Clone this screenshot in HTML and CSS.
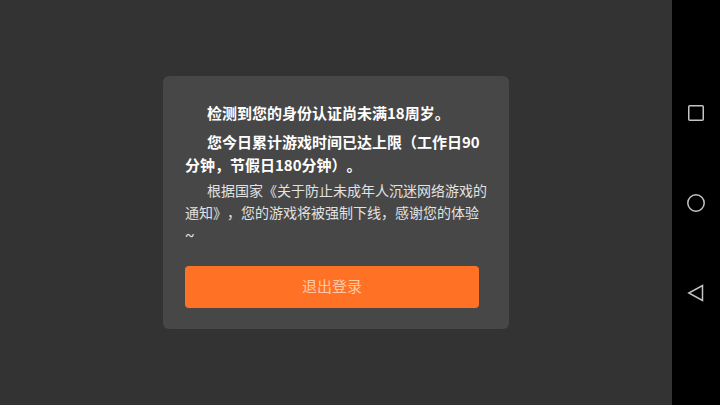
FILE: index.html
```html
<!DOCTYPE html>
<html lang="zh-CN">
<head>
<meta charset="utf-8">
<title>防沉迷提示</title>
<link rel="stylesheet" href="styles.css">
</head>
<body>
<main class="stage">
  <section class="dialog">
    <p class="lead first">检测到您的身份认证尚未满18周岁。</p>
    <p class="lead second">您今日累计游戏时间已达上限（工作日90分钟，节假日180分钟）。</p>
    <p class="note">根据国家《关于防止未成年人沉迷网络游戏的通知》，您的游戏将被强制下线，感谢您的体验~</p>
    <button class="logout">退出登录</button>
  </section>
</main>
<nav class="navbar">
  <svg class="nav-icon" viewBox="0 0 18 18"><rect x="1.75" y="1.75" width="14.5" height="14.5" rx="1" /></svg>
  <svg class="nav-icon" viewBox="0 0 18 18"><circle cx="9" cy="9" r="8.2" /></svg>
  <svg class="nav-icon" viewBox="0 0 18 18"><path d="M15.5 1.5V16.5L1.8 9Z" /></svg>
</nav>
</body>
</html>
```

FILE: styles.css
```css
* { box-sizing: border-box; }
html, body { margin: 0; height: 100%; }
body {
  display: flex;
  width: 720px;
  height: 405px;
  overflow: hidden;
  background: #333333;
  font-family: "Roboto", "Noto Sans CJK SC", sans-serif;
  text-spacing-trim: space-all;
}
.stage {
  width: 672px;
  height: 405px;
  display: flex;
  align-items: flex-start;
  justify-content: center;
  padding: 76px 0 0 0;
}
.dialog {
  width: 346px;
  height: 253px;
  background: #474747;
  border-radius: 6px;
  padding: 25px 22px 0 22px;
}
.lead {
  margin: 0;
  color: #ffffff;
  font-family: "Noto Sans CJK SC", sans-serif;
  font-size: 15px;
  font-weight: 700;
  line-height: 23px;
  text-indent: 22px;
}
.second { margin-top: 6px; }
.note {
  margin: 4px 0 0 0;
  color: #e2e2e2;
  font-size: 14px;
  line-height: 22px;
  text-indent: 22px;
}
.logout {
  display: block;
  width: 294px;
  height: 42px;
  margin-top: 20px;
  padding: 0 0 4px;
  border: 0;
  border-radius: 4px;
  background: #ff7226;
  color: #ffc9a6;
  font-family: inherit;
  font-size: 15px;
}
.navbar {
  width: 48px;
  height: 405px;
  background: #000000;
  display: flex;
  flex-direction: column;
  align-items: center;
  gap: 72px;
  padding-top: 104px;
}
.nav-icon {
  width: 18px;
  height: 18px;
  fill: none;
  stroke: #c4c4c4;
  stroke-width: 1.5;
}
```
